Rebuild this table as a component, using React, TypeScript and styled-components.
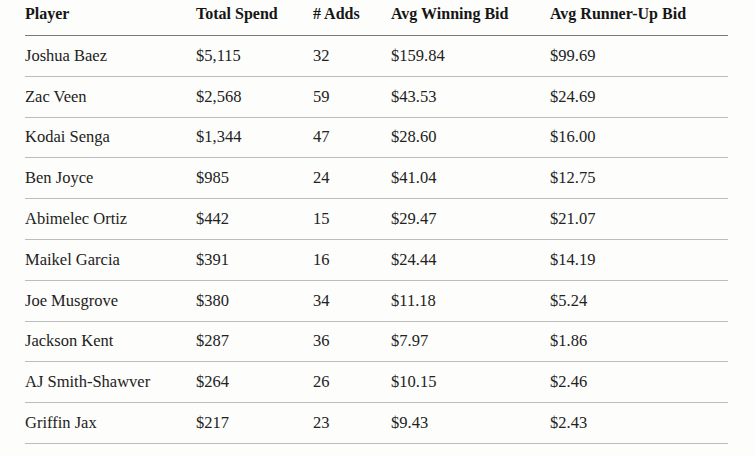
import React from 'react';
import styled, { createGlobalStyle } from 'styled-components';

const GlobalStyle = createGlobalStyle`
  html, body {
    margin: 0;
    padding: 0;
    background: #fdfdfb;
  }
  body {
    font-family: 'Liberation Serif', 'Times New Roman', serif;
    color: #1c1c1c;
  }
`;

interface IRow {
  player: string;
  spend: string;
  adds: number;
  winning: string;
  runnerUp: string;
}

const rows: IRow[] = [
  { player: 'Joshua Baez', spend: '$5,115', adds: 32, winning: '$159.84', runnerUp: '$99.69' },
  { player: 'Zac Veen', spend: '$2,568', adds: 59, winning: '$43.53', runnerUp: '$24.69' },
  { player: 'Kodai Senga', spend: '$1,344', adds: 47, winning: '$28.60', runnerUp: '$16.00' },
  { player: 'Ben Joyce', spend: '$985', adds: 24, winning: '$41.04', runnerUp: '$12.75' },
  { player: 'Abimelec Ortiz', spend: '$442', adds: 15, winning: '$29.47', runnerUp: '$21.07' },
  { player: 'Maikel Garcia', spend: '$391', adds: 16, winning: '$24.44', runnerUp: '$14.19' },
  { player: 'Joe Musgrove', spend: '$380', adds: 34, winning: '$11.18', runnerUp: '$5.24' },
  { player: 'Jackson Kent', spend: '$287', adds: 36, winning: '$7.97', runnerUp: '$1.86' },
  { player: 'AJ Smith-Shawver', spend: '$264', adds: 26, winning: '$10.15', runnerUp: '$2.46' },
  { player: 'Griffin Jax', spend: '$217', adds: 23, winning: '$9.43', runnerUp: '$2.43' },
];

// Wrapper that keeps the table off the left edge
const Wrapper = styled.div`
  padding: 0 27px 0 25px;
`;

const Row = styled.div<{ $header?: boolean }>`
  display: grid;
  grid-template-columns: 171px 117px 78px 159px 1fr;
  align-items: center;
  height: ${(p) => (p.$header ? '36px' : '40.8px')};
  padding-bottom: ${(p) => (p.$header ? '7px' : '0')};
  box-sizing: border-box;
  border-bottom: ${(p) => (p.$header ? '1.5px solid #7a7a7a' : '1px solid #bdbdbd')};
`;

const HeadCell = styled.div`
  font-size: 16px;
  font-weight: 700;
  color: #161616;
  white-space: nowrap;
`;

const Cell = styled.div`
  font-size: 16.5px;
  color: #222;
  white-space: nowrap;
`;

export default function App() {
  return (
    <>
      <GlobalStyle />
      <Wrapper>
        <Row $header>
          <HeadCell>Player</HeadCell>
          <HeadCell>Total Spend</HeadCell>
          <HeadCell># Adds</HeadCell>
          <HeadCell>Avg Winning Bid</HeadCell>
          <HeadCell>Avg Runner-Up Bid</HeadCell>
        </Row>
        {rows.map((row) => (
          <Row key={row.player}>
            <Cell>{row.player}</Cell>
            <Cell>{row.spend}</Cell>
            <Cell>{row.adds}</Cell>
            <Cell>{row.winning}</Cell>
            <Cell>{row.runnerUp}</Cell>
          </Row>
        ))}
      </Wrapper>
    </>
  );
}
